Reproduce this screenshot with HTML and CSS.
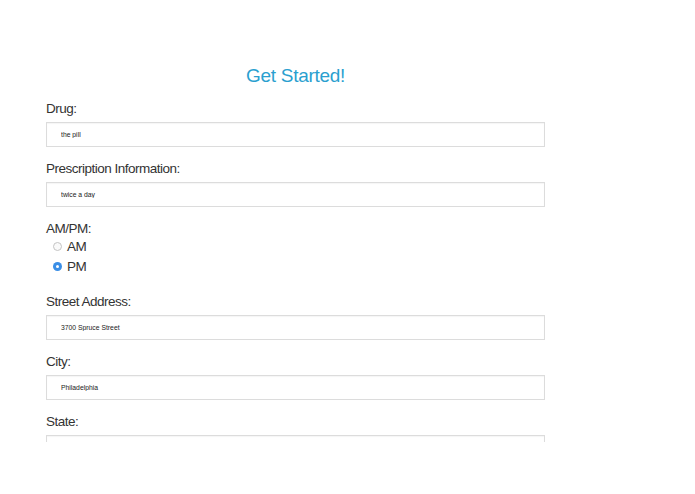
FILE: index.html
```html
<!DOCTYPE html>
<html lang="en">
<head>
    <meta charset="UTF-8">
    <meta name="viewport" content="width=device-width, initial-scale=1.0">
    <title>Get Started</title>
    <link rel="stylesheet" href="styles.css">
</head>
<body>
    <div class="page">
        <div class="container">
            <h1 class="title">Get Started!</h1>

            <div class="field">
                <label class="label" for="drug">Drug:</label>
                <input class="input" id="drug" type="text" value="the pill">
            </div>

            <div class="field">
                <label class="label" for="info">Prescription Information:</label>
                <input class="input" id="info" type="text" value="twice a day">
            </div>

            <div class="field radios">
                <div class="label">AM/PM:</div>
                <label class="radio"><span class="dot"></span>AM</label>
                <label class="radio"><span class="dot checked"></span>PM</label>
            </div>

            <div class="field">
                <label class="label" for="street">Street Address:</label>
                <input class="input" id="street" type="text" value="3700 Spruce Street">
            </div>

            <div class="field">
                <label class="label" for="city">City:</label>
                <input class="input" id="city" type="text" value="Philadelphia">
            </div>

            <div class="field">
                <label class="label" for="state">State:</label>
                <input class="input" id="state" type="text" value="">
            </div>
        </div>
    </div>
</body>
</html>
```

FILE: styles.css
```css
* {
    margin: 0;
    padding: 0;
    box-sizing: border-box;
}

body {
    font-family: "Liberation Sans", Arial, sans-serif;
    background: #fff;
    color: #333;
}

.page {
    height: 442px;
    overflow: hidden;
}

.container {
    width: 499px;
    margin-left: 46px;
    padding-top: 64px;
}

.title {
    font-size: 19px;
    font-weight: normal;
    line-height: 24px;
    letter-spacing: -0.3px;
    color: #2a9fcf;
    text-align: center;
    margin-bottom: 12px;
}

.field {
    margin-bottom: 13px;
}

.label {
    display: block;
    font-size: 13.5px;
    line-height: 18px;
    letter-spacing: -0.5px;
    color: #333;
    margin-bottom: 4px;
}

.input {
    display: block;
    width: 100%;
    height: 25px;
    border: 1px solid #dcdcdc;
    box-shadow: inset 0 1px 1px rgba(0,0,0,0.04);
    padding: 0 14px;
    font-family: "Liberation Sans", Arial, sans-serif;
    font-size: 6.8px;
    color: #222;
    background: #fff;
    outline: none;
}

.radios {
    margin-bottom: 17px;
}

.radios .label {
    margin-bottom: -2px;
}

.radio {
    display: flex;
    align-items: center;
    height: 20px;
    padding-left: 7px;
    font-size: 13.5px;
    letter-spacing: -0.4px;
    color: #333;
}

.dot {
    width: 9px;
    height: 9px;
    border-radius: 50%;
    border: 1px solid #c4c4c4;
    background: #fafafa;
    margin-right: 5px;
}

.dot.checked {
    border: none;
    background: #3a8ee6;
    position: relative;
}

.dot.checked::after {
    content: "";
    position: absolute;
    left: 3px;
    top: 3px;
    width: 3px;
    height: 3px;
    border-radius: 50%;
    background: #fff;
}
```
